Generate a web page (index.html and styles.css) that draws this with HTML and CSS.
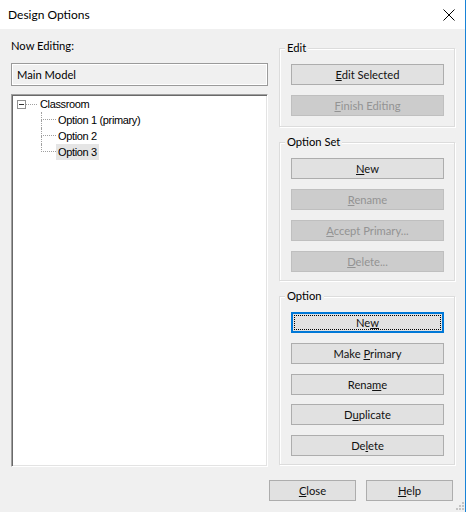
FILE: index.html
```html
<!DOCTYPE html>
<html>
<head>
<meta charset="utf-8">
<title>Design Options</title>
<link rel="stylesheet" href="styles.css">
</head>
<body>
<div class="window">
  <div class="titlebar">
    <span class="title">Design Options</span>
    <svg class="close" width="12" height="12" viewBox="0 0 12 12"><path d="M0.5 0.5 L11.5 11.5 M11.5 0.5 L0.5 11.5" stroke="#000" stroke-width="1" fill="none"/></svg>
  </div>
  <div class="main">
    <div class="left">
      <div class="label">Now Editing:</div>
      <div class="field">Main Model</div>
      <div class="tree">
        <div class="row root">
          <span class="expander"><span class="minus"></span></span>
          <span class="hline"></span>
          <span class="node">Classroom</span>
        </div>
        <div class="row child">
          <span class="branch"><span class="elbow"></span><span class="rest"></span></span>
          <span class="node">Option 1 (primary)</span>
        </div>
        <div class="row child">
          <span class="branch"><span class="elbow"></span><span class="rest"></span></span>
          <span class="node">Option 2</span>
        </div>
        <div class="row child last">
          <span class="branch"><span class="elbow"></span><span class="rest"></span></span>
          <span class="node selected">Option 3</span>
        </div>
      </div>
    </div>
    <div class="right">
      <fieldset class="group g-edit">
        <legend>Edit</legend>
        <button class="btn"><u>E</u>dit Selected</button>
        <button class="btn" disabled><u>F</u>inish Editing</button>
      </fieldset>
      <fieldset class="group g-set">
        <legend>Option Set</legend>
        <button class="btn"><u>N</u>ew</button>
        <button class="btn" disabled><u>R</u>ename</button>
        <button class="btn" disabled><u>A</u>ccept Primary...</button>
        <button class="btn" disabled><u>D</u>elete...</button>
      </fieldset>
      <fieldset class="group g-opt">
        <legend>Option</legend>
        <button class="btn focused">Ne<u>w</u></button>
        <button class="btn">Make <u>P</u>rimary</button>
        <button class="btn">Rena<u>m</u>e</button>
        <button class="btn">D<u>u</u>plicate</button>
        <button class="btn">De<u>l</u>ete</button>
      </fieldset>
    </div>
  </div>
  <div class="footer">
    <button class="btn wide"><u>C</u>lose</button>
    <button class="btn wide"><u>H</u>elp</button>
    <svg class="grip" width="10" height="10" viewBox="0 0 10 10" fill="#c4c4c4"><rect x="8" y="2" width="2" height="2"/><rect x="8" y="5" width="2" height="2"/><rect x="8" y="8" width="2" height="2"/><rect x="5" y="5" width="2" height="2"/><rect x="5" y="8" width="2" height="2"/><rect x="2" y="8" width="2" height="2"/></svg>
  </div>
</div>
</body>
</html>
```

FILE: styles.css
```css
* { box-sizing: border-box; }
html, body { margin: 0; padding: 0; }
body {
  width: 466px;
  height: 512px;
  overflow: hidden;
  background: #f0f0f0;
  font-family: Lato, "Noto Sans", sans-serif;
  font-size: 11.2px;
  font-weight: 400;
  color: #000;
}
.window {
  width: 466px;
  height: 512px;
  border-right: 1px solid #1883d7;
  display: flex;
  flex-direction: column;
}
.titlebar {
  height: 29px;
  background: #fff;
  display: flex;
  align-items: center;
  justify-content: space-between;
  padding: 0 10px 0 8px;
  flex: none;
}
.title { font-size: 12px; }
.close { display: block; margin-top: 1px; }

.main {
  display: flex;
  gap: 11px;
  padding: 10px 0 0 11px;
}
.left { width: 257px; display: flex; flex-direction: column; }
.label { height: 14px; line-height: 14px; }
.field {
  margin-top: 10px;
  height: 23px;
  line-height: 21px;
  padding-left: 5px;
  border: 1px solid #9a9a9a;
  box-shadow: inset 1px 1px 0 #fff, inset -1px -1px 0 #fff;
}
.tree {
  margin-top: 8px;
  height: 373px;
  background: #fff;
  border-style: solid;
  border-width: 1px;
  border-color: #a0a0a0 #fff #fff #a0a0a0;
  box-shadow: inset 1px 1px 0 #696969, inset -1px -1px 0 #e3e3e3;
  padding: 1px 0 0 1px;
  font-family: "Liberation Sans", Arial, sans-serif;
  font-size: 11px;
  letter-spacing: -0.35px;
}
.row { height: 16px; display: flex; align-items: center; }
.root { padding-left: 4px; }
.expander {
  width: 9px; height: 9px;
  border: 1px solid #919191;
  background: #fff;
  display: flex;
  align-items: center;
  justify-content: center;
  flex: none;
}
.minus { width: 5px; height: 1px; background: #333; }
.hline { width: 11px; border-top: 1px dotted #a0a0a0; flex: none; }
.node { padding: 0 2px; line-height: 16px; height: 16px; }
.root .node { margin-left: 1px; }
.selected { background: #e5e5e5; }
.child { padding-left: 28px; }
.branch { width: 15px; height: 16px; display: flex; flex-direction: column; flex: none; }
.elbow { height: 8px; border-left: 1px dotted #a0a0a0; border-bottom: 1px dotted #a0a0a0; }
.rest { height: 8px; border-left: 1px dotted #a0a0a0; }
.last .rest { border-left: none; }

.right { width: 176px; padding-top: 2px; display: flex; flex-direction: column; }
.group {
  margin: 0;
  border: 1px solid #dcdcdc;
  box-shadow: inset 1px 1px 0 #fff, 1px 1px 0 #fff;
  padding: 9px 10px 10px 11px;
  display: flex;
  flex-direction: column;
  gap: 10px;
  min-width: 0;
}
.group legend {
  padding: 0 2px;
  margin-left: -6px;
  line-height: 14px;
  height: 14px;
  background: #f0f0f0;
}
.g-set { margin-top: 8px; padding-bottom: 8px; }
.g-opt { margin-top: 8px; padding-bottom: 8px; gap: 9px; }

.btn {
  font-family: inherit;
  font-size: 11.2px;
  font-weight: 400;
  color: #111;
  height: 21px;
  padding: 0;
  margin: 0;
  background: #e1e1e1;
  border: 1px solid #adadad;
  border-radius: 0;
  line-height: 19px;
  width: 100%;
}
.g-opt .btn { height: 21px; line-height: 19px; }
.g-opt .btn.focused { margin-bottom: 1px; }
.g-opt .btn:nth-child(3) { margin-bottom: 1px; }
.g-opt .btn:nth-child(5) { margin-bottom: 1px; }
.btn:disabled {
  background: #cccccc;
  border-color: #bfbfbf;
  color: #939393;
}
.btn.focused {
  border-color: #0078d7;
  box-shadow: inset 0 0 0 1px #0078d7;
  outline: 1px dotted #000;
  outline-offset: -4px;
}
.footer {
  position: relative;
  margin-top: 13px;
  display: flex;
  justify-content: flex-end;
  align-items: flex-start;
  gap: 10px;
  padding-right: 12px;
}
.btn.wide { width: 87px; }
.grip { position: absolute; right: 1px; top: 20px; }
```
